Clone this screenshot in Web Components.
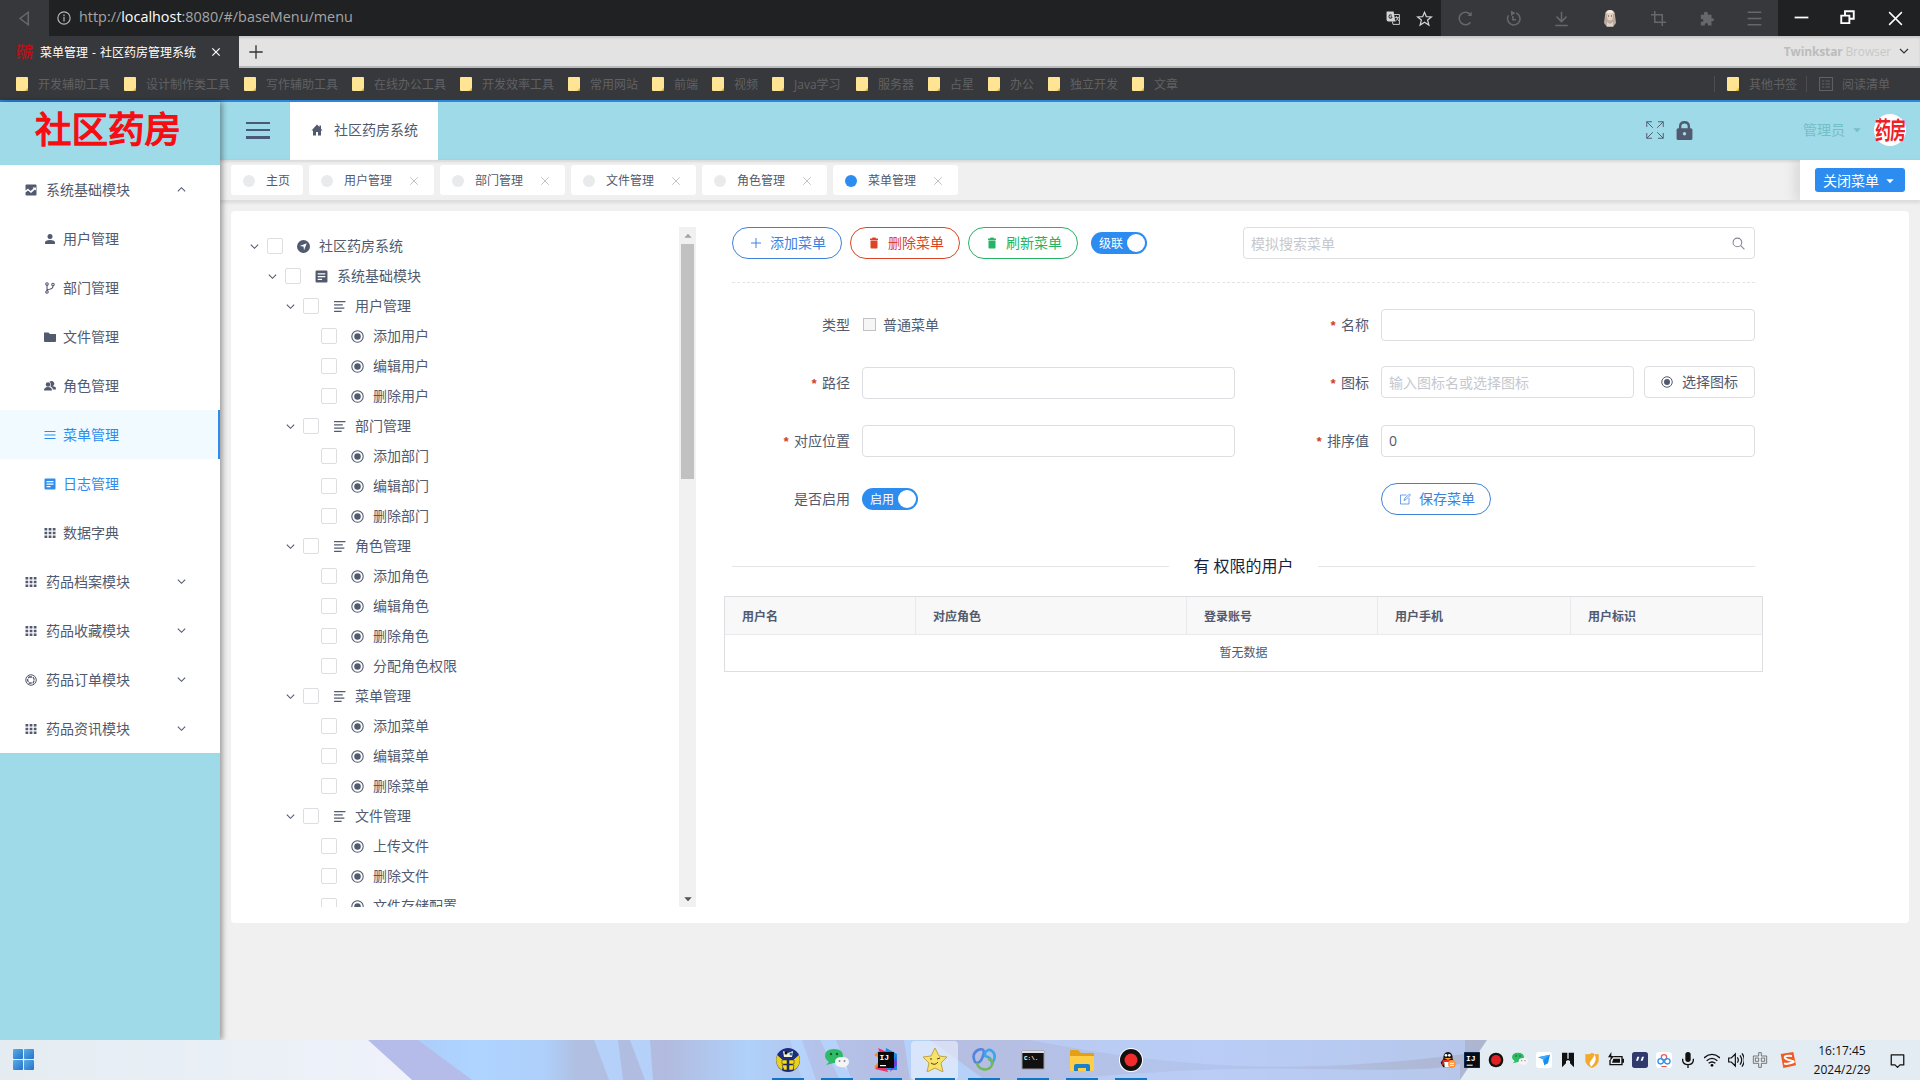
<!DOCTYPE html>
<html lang="zh-CN">
<head>
<meta charset="UTF-8">
<title>菜单管理 - 社区药房管理系统</title>
<style>
  html, body {
    margin: 0;
    height: 100%;
  }

  body {
    width: 1920px;
    height: 1080px;
    display: flex;
    flex-direction: column;
    overflow: hidden;
    background: #f0f0f0;
    color: #515a6e;
    font: 14px/20px "Open Sans", "Noto Sans CJK SC", sans-serif;
  }

  .app {
    flex: 1;
    min-height: 0;
    display: flex;
  }

  .main {
    flex: 1;
    min-width: 0;
    display: flex;
    flex-direction: column;
  }

  .card {
    box-sizing: border-box;
    width: 1678px;
    height: 712px;
    margin: 11px 0 0 11px;
    padding: 16px 0 0 16px;
    display: flex;
    background: #fff;
    border-radius: 4px;
  }
</style>
</head>
<body>
<browser-chrome></browser-chrome>
<div class="app">
  <side-menu></side-menu>
  <div class="main">
    <app-header></app-header>
    <tab-strip></tab-strip>
    <div class="card">
      <menu-tree></menu-tree>
      <menu-editor></menu-editor>
    </div>
  </div>
</div>
<task-bar></task-bar>

<script>
// 24x24 icon bodies, drawn in currentColor
const ICONS = {
  down: '<path d="M4 8l8 8 8-8" fill="none" stroke="currentColor" stroke-width="2.4"/>',
  up: '<path d="M4 16l8-8 8 8" fill="none" stroke="currentColor" stroke-width="2.4"/>',
  close: '<path d="M3 3l18 18M21 3L3 21" fill="none" stroke="currentColor" stroke-width="2"/>',
  cross: '<path d="M1 1l22 22M23 1L1 23" fill="none" stroke="currentColor" stroke-width="3.6"/>',
  caret: '<path d="M1 7h22L12 19z"/>',
  plus: '<path d="M12 2v20M2 12h20" fill="none" stroke="currentColor" stroke-width="2"/>',
  home: '<path d="M12 1L1 13h3v10h6v-7h4v7h6V13h3l-3-3.500V3h-3v3z"/>',
  trend: '<path fill-rule="evenodd" d="M3 1h18q2 0 2 2v18q0 2-2 2H3q-2 0-2-2V3q0-2 2-2zM1 13l5-4 5 5 6-5-2-2h7v6l-2-2-8 7-6-5-5 4z"/>',
  user: '<circle cx="12" cy="7" r="5"/><path d="M2 22v-3q0-5 10-5t10 5v3z"/>',
  branch: '<g fill="none" stroke="currentColor" stroke-width="2.200"><circle cx="6" cy="4" r="2.500"/><circle cx="6" cy="20" r="2.500"/><circle cx="18" cy="5" r="2.500"/><path d="M6 6v12M18 8q0 5-5 6t-7 3"/></g>',
  folder: '<path d="M0 3h9l3 3h12v3H0zM0 9h24v11q0 2-2 2H2q-2 0-2-2z"/>',
  users: '<circle cx="8" cy="9" r="4.500"/><path d="M0 21q0-7 8-7t8 7zM11 3q7-3 9 2t-3 7l6 2q1 2 1 5h-6q-1-5-5-6 2-6-2-10z"/>',
  menu: '<path d="M1 5h22M1 12h22M1 19h22" fill="none" stroke="currentColor" stroke-width="2.200"/>',
  paper: '<path fill-rule="evenodd" d="M3 1h18q2 0 2 2v18q0 2-2 2H3q-2 0-2-2V3q0-2 2-2zM5 6v2.500h14V6zM5 11v2.500h14V11zM5 16v2.500h8V16z"/>',
  grid: '<path d="M1 2h5.500v5H1zM9.300 2h5.500v5H9.300zM17.500 2H23v5h-5.500zM1 9.500h5.500v5H1zM9.300 9.500h5.500v5H9.300zM17.500 9.500H23v5h-5.500zM1 17h5.500v5H1zM9.300 17h5.500v5H9.300zM17.500 17H23v5h-5.500z"/>',
  aperture: '<g fill="none" stroke="currentColor" stroke-width="2"><circle cx="12" cy="12" r="10.500"/><path d="M8 6h8l3 6-3 6H8l-3-6z" stroke-width="2.600" stroke-dasharray="6 2"/></g>',
  nav: '<path fill-rule="evenodd" d="M12 0a12 12 0 100 24 12 12 0 000-24zM18 6l-5 13-1-7-7-1z"/>',
  text: '<path d="M2 3h21M2 9h16M2 15h19M2 21h14" fill="none" stroke="currentColor" stroke-width="2"/>',
  radio: '<circle cx="12" cy="12" r="10.500" fill="none" stroke="currentColor" stroke-width="2"/><circle cx="12" cy="12" r="6"/>',
  trash: '<path d="M9 1h6l1 2h4v3H4V3h4zM5 7h14v14q0 2-2 2H7q-2 0-2-2z"/>',
  search: '<g fill="none" stroke="currentColor" stroke-width="2"><circle cx="10" cy="10" r="8"/><path d="M16 16l7 7"/></g>',
  edit: '<g fill="none" stroke="currentColor" stroke-width="1.500"><path d="M15 4H3v18h17V10"/><path d="M10 15l2-5L21 2l2 2-9 9z"/></g>',
  expand: '<path d="M1 8V1h7M1 1l8 8M16 1h7v7M23 1l-8 8M1 16v7h7M1 23l8-8M23 16v7h-7M23 23l-8-8" fill="none" stroke="currentColor" stroke-width="1.300"/>',
  lock: '<path fill-rule="evenodd" d="M5 9V7q0-7 7-7t7 7v2h1q2 0 2 2v11q0 2-2 2H4q-2 0-2-2V11q0-2 2-2zM8 9h8V7q0-4-4-4T8 7zM12 14a2.200 2.200 0 100 4.400 2.200 2.200 0 000-4.400z"/>',
  back: '<path d="M18 2v20L5 12z" fill="none" stroke="currentColor" stroke-width="2.500"/>',
  info: '<circle cx="12" cy="12" r="10.500" fill="none" stroke="currentColor" stroke-width="2"/><path d="M11 10h2v8h-2zM11 6h2v2.500h-2z"/>',
  translate: '<path d="M1 1h12l3 17H4q-3 0-3-3z"/><path d="M14 6h9v17H12l-1-5" fill="none" stroke="currentColor" stroke-width="1.600"/><path d="M15 11h7M18 9v2q3 5 4 6M21 11q-1 4-5 6" fill="none" stroke="currentColor" stroke-width="1.500"/><path d="M10 7q-5-2-5 2.500T10 12v-2H8" fill="none" stroke="#202123" stroke-width="1.600"/>',
  star: '<path d="M12 2l3 7 8 .500-6 5 2 8-7-4.500-7 4.500 2-8-6-5L9 9z" fill="none" stroke="currentColor" stroke-width="2"/>',
  reload: '<path d="M20 18a10 10 0 110-12" fill="none" stroke="currentColor" stroke-width="2.400"/><path d="M22 1v7h-7z"/>',
  history: '<path d="M16 3a10 10 0 11-12 4M11 8v6h5" fill="none" stroke="currentColor" stroke-width="2.400"/><path d="M8-1v9l7-5z"/>',
  download: '<path d="M12 1v16M4 9l8 8 8-8M2 23h20" fill="none" stroke="currentColor" stroke-width="2.400"/>',
  crop: '<path d="M6 0v18h18M0 6h18v18" fill="none" stroke="currentColor" stroke-width="2.400"/>',
  puzzle: '<path d="M3 6h5q-1-5 3-5t3 5h6v6q4-1 4 2t-4 2v7h-6q1-4-2-4t-3 4H3v-6q4 1 4-2t-4-2z"/>',
  lines: '<path d="M1 2h22M1 12h22M1 22h22" fill="none" stroke="currentColor" stroke-width="2.400"/>',
  min: '<path d="M1 12h22" stroke="currentColor" stroke-width="2.800"/>',
  restore: '<path d="M8 8V2h14v12h-6M2 9h13v12H2z" fill="none" stroke="currentColor" stroke-width="3"/>',
  list: '<path d="M1 1h22v22H1zM5 7h4M11 7h8M5 12h4M11 12h8M5 17h4M11 17h8" fill="none" stroke="currentColor" stroke-width="1.800"/>',
  bell: '<path d="M2 3h20v16h-6l-4 4-4-4H2z" fill="none" stroke="currentColor" stroke-width="2" stroke-linejoin="round"/>'
};

class UiIcon extends HTMLElement {
  connectedCallback() {
    const size = this.getAttribute('size') || 12;
    const root = this.attachShadow({ mode: 'open' });
    root.innerHTML = `
      <style>
        :host { display: inline-flex; flex: none; width: ${size}px; height: ${size}px; }
        svg { width: 100%; height: 100%; fill: currentColor; overflow: visible; }
      </style>
      <svg viewBox="0 0 24 24">${ICONS[this.getAttribute('name')]}</svg>
    `;
  }
}
customElements.define('ui-icon', UiIcon);

class BrowserChrome extends HTMLElement {
  connectedCallback() {
    const marks = ['开发辅助工具', '设计制作类工具', '写作辅助工具', '在线办公工具', '开发效率工具', '常用网站',
      '前端', '视频', 'Java学习', '服务器', '占星', '办公', '独立开发', '文章'];
    const tools = ['reload', 'history', 'download', 'face', 'crop', 'puzzle', 'lines'];
    const mark = m => `<span class="mark"><i></i><span style="width:${m === 'Java学习' ? 48 : m.length * 12}px">${m}</span></span>`;
    this.attachShadow({ mode: 'open' }).innerHTML = `
      <style>
        :host { display: block; flex: none; height: 102px; font-size: 12px; color: #606164; }
        .row { display: flex; align-items: center; box-sizing: border-box; }
        .top { height: 36px; background: #202123; }
        .back { width: 49px; height: 36px; background: #37383b; display: flex; align-items: center; justify-content: center; color: #66676a; }
        .info { margin-left: 8px; color: #b8b8b9; }
        .url { flex: 1; margin-left: 8px; padding-bottom: 2px; font-size: 14.4px; color: #a4a5a6; white-space: nowrap; }
        .url b { font-weight: 400; color: #fff; }
        .page { display: flex; gap: 17px; margin-right: 9px; color: #d4d4d4; }
        .tools { width: 337px; height: 36px; background: #37383b; color: #66676a; display: flex; align-items: center; justify-content: space-around; }
        .tools > * { flex: none; }
        .win { width: 142px; display: flex; justify-content: space-around; color: #fff; }
        .tabs { height: 32px; background: #e3e3e3; border-bottom: 2px solid #b9babc; box-shadow: inset 0 2px 2px #c8c8c8; }
        .tab { width: 239px; height: 32px; align-self: flex-start; background: #37383b; color: #fff; display: flex; align-items: center; box-sizing: border-box; padding-left: 16px; }
        .fav { width: 16px; font: bold 9px/16px "Noto Sans CJK SC", sans-serif; transform: scaleY(1.6); color: #c20d19; letter-spacing: -1px; white-space: nowrap; }
        .tab .name { margin: 1px 15px 0 8px; width: 157px; word-spacing: 1px; white-space: nowrap; }
        .add { flex: 1; padding: 1px 0 0 9px; color: #333; display: flex; }
        .brand { color: #c8c8c8; margin: 2px 7px 0 0; letter-spacing: -.15px; }
        .brand b { color: #bcbcbc; }
        .marks { height: 32px; background: #37383b; padding-left: 16px; }
        .list { flex: 1; display: flex; gap: 14px; }
        .mark { display: flex; gap: 10px; align-items: center; white-space: nowrap; }
        .mark > span { padding-top: 2px; }
        .mark i { width: 12px; height: 14px; background: linear-gradient(315deg, #e9bd38 0 14%, #ffe493 15%); border-radius: 1px; }
        .sep { width: 1px; height: 16px; background: #4c4d50; }
        .line { height: 2px; background: #2d86dc; }
      </style>
      <div class="row top">
        <div class="back"><ui-icon name="back" size="15"></ui-icon></div>
        <ui-icon class="info" name="info" size="14"></ui-icon>
        <div class="url">http://<b>localhost</b>:8080/#/baseMenu/menu</div>
        <div class="page"><ui-icon name="translate" size="14"></ui-icon><ui-icon name="star" size="15"></ui-icon></div>
        <div class="tools">${tools.map(t => t === 'face'
          ? '<svg width="16" height="18" viewBox="0 0 16 18"><path d="M3 6q0-5 5-5t5 5l1 8-3 4H5l-3-4z" fill="#b8aca0"/><ellipse cx="8" cy="7.500" rx="3" ry="4" fill="#ead0bd"/><path d="M4 5q1-4 4-4t4 4q-4-2-8 0z" fill="#f0ebe4"/><path d="M6 7h1M9 7h1" stroke="#4b3030"/><path d="M5 13l3 2 3-2v4H5z" fill="#ddd3ca"/></svg>'
          : `<ui-icon name="${t}" size="15"></ui-icon>`).join('')}</div>
        <div class="win"><ui-icon name="min" size="15"></ui-icon><ui-icon name="restore" size="15"></ui-icon><ui-icon name="close" size="17"></ui-icon></div>
      </div>
      <div class="row tabs">
        <div class="tab"><span class="fav">药房</span><span class="name">菜单管理 - 社区药房管理系统</span><ui-icon name="cross" size="8"></ui-icon></div>
        <div class="add"><ui-icon name="plus" size="16"></ui-icon></div>
        <span class="brand"><b>Twinkstar</b> Browser</span>
        <ui-icon name="down" size="12" style="color:#333;margin-right:10px"></ui-icon>
      </div>
      <div class="row marks">
        <div class="list">${marks.map(mark).join('')}</div>
        <span class="sep" style="margin-right:12px"></span>${mark('其他书签')}
        <span class="sep" style="margin:0 12px 0 9px"></span>
        <ui-icon name="list" size="14"></ui-icon><span style="margin:2px 30px 0 9px">阅读清单</span>
      </div>
      <div class="line"></div>
    `;
  }
}
customElements.define('browser-chrome', BrowserChrome);

class SideMenu extends HTMLElement {
  connectedCallback() {
    const items = [
      ['trend', '系统基础模块', 'up'],
      ['user', '用户管理'],
      ['branch', '部门管理'],
      ['folder', '文件管理'],
      ['users', '角色管理'],
      ['menu', '菜单管理', '', 'on'],
      ['paper', '日志管理', '', 'hover'],
      ['grid', '数据字典'],
      ['grid', '药品档案模块', 'down'],
      ['grid', '药品收藏模块', 'down'],
      ['aperture', '药品订单模块', 'down'],
      ['grid', '药品资讯模块', 'down']
    ];
    this.attachShadow({ mode: 'open' }).innerHTML = `
      <style>
        :host { display: block; flex: none; width: 220px; background: #9edae7; box-shadow: 2px 0 6px rgba(0, 0, 0, .4); z-index: 2; }
        .logo { height: 63px; box-sizing: border-box; padding-left: 35px; font-size: 36.5px; line-height: 55px; color: #f60d12; -webkit-text-stroke: 1.4px #f60d12; white-space: nowrap; }
        .menu { background: #fff; }
        .item { height: 49px; box-sizing: border-box; display: flex; align-items: center; gap: 9px; padding: 0 33px 0 25px; }
        .item.sub { padding-left: 44px; gap: 7px; }
        .item span { flex: 1; }
        .on, .hover { color: #2d8cf0; }
        .on { background: #f0faff; border-right: 2px solid #2d8cf0; }
      </style>
      <div class="logo">社区药房</div>
      <div class="menu">
        ${items.map(([icon, name, arrow, state]) => `
          <div class="item ${arrow ? '' : 'sub'} ${state || ''}">
            <ui-icon name="${icon}" size="12"></ui-icon><span>${name}</span>
            ${arrow ? `<ui-icon name="${arrow}" size="11"></ui-icon>` : ''}
          </div>`).join('')}
      </div>
    `;
  }
}
customElements.define('side-menu', SideMenu);

class AppHeader extends HTMLElement {
  connectedCallback() {
    this.attachShadow({ mode: 'open' }).innerHTML = `
      <style>
        :host { display: flex; flex: none; align-items: center; height: 58px; background: #9edae7; }
        .burger { width: 24px; height: 17px; margin: 0 20px 2px 26px; display: flex; flex-direction: column; justify-content: space-between; }
        .burger i { height: 2.5px; background: #495a78; }
        .sys { width: 148px; height: 58px; box-sizing: border-box; padding: 0 0 2px 21px; display: flex; align-items: center; gap: 11px; background: #fff; }
        .tools { margin-left: auto; padding-bottom: 2px; display: flex; align-items: center; }
        .user { margin: 0 8px 0 109px; color: #74bfc5; }
        .avatar { width: 32px; height: 32px; margin: 0 14px 0 13px; border-radius: 50%; background: #fff; color: #ee2027; text-align: center; }
        .avatar span { display: block; font-size: 16px; font-weight: 700; line-height: 32px; letter-spacing: -1px; transform: scaleY(1.5); white-space: nowrap; }
      </style>
      <div class="burger"><i></i><i></i><i></i></div>
      <div class="sys"><ui-icon name="home" size="12"></ui-icon>社区药房系统</div>
      <div class="tools">
        <ui-icon name="expand" size="18"></ui-icon>
        <ui-icon name="lock" size="19" style="margin-left:11px"></ui-icon>
        <span class="user">管理员</span>
        <ui-icon name="caret" size="8" style="color:#74bfc5"></ui-icon>
        <div class="avatar"><span>药房</span></div>
      </div>
    `;
  }
}
customElements.define('app-header', AppHeader);

class TabStrip extends HTMLElement {
  connectedCallback() {
    const tabs = ['主页', '用户管理', '部门管理', '文件管理', '角色管理', '菜单管理'];
    this.attachShadow({ mode: 'open' }).innerHTML = `
      <style>
        :host { display: flex; flex: none; align-items: center; gap: 6px; height: 40px; padding-left: 11px; background: #f0f0f0; font-size: 12px; box-shadow: 0 2px 3px 1px rgba(100, 100, 100, .14), inset 0 3px 2px -1px rgba(100, 100, 100, .15); }
        .tab { width: 125px; height: 30px; box-sizing: border-box; padding: 1px 15px 0 12px; display: flex; align-items: center; background: #fff; border-radius: 3px; }
        .tab.first { width: 72px; padding-right: 0; }
        .tab i { width: 12px; height: 12px; margin-right: 11px; border-radius: 50%; background: #e8eaec; }
        .tab.on i { background: #2d8cf0; }
        .tab ui-icon { margin-left: auto; color: #b5b8be; }
        .end { align-self: stretch; width: 120px; margin-left: auto; display: flex; align-items: center; justify-content: center; background: #fff; box-shadow: -3px 0 12px 2px rgba(0, 0, 0, .1); clip-path: inset(0 0 0 -18px); }
        .btn { width: 90px; height: 24px; box-sizing: border-box; padding: 1px 0 0 8px; display: flex; align-items: center; gap: 7px; border-radius: 3px; background: #2d8cf0; color: #fff; font-size: 14px; }
      </style>
      ${tabs.map((t, i) => `<div class="tab ${i ? '' : 'first'} ${i === 5 ? 'on' : ''}"><i></i>${t}${i ? '<ui-icon name="close" size="10"></ui-icon>' : ''}</div>`).join('')}
      <div class="end"><span class="btn">关闭菜单<ui-icon name="caret" size="8"></ui-icon></span></div>
    `;
  }
}
customElements.define('tab-strip', TabStrip);

class MenuTree extends HTMLElement {
  connectedCallback() {
    const rows = [[0, '社区药房系统'], [1, '系统基础模块']];
    const groups = {
      '用户管理': ['添加用户', '编辑用户', '删除用户'],
      '部门管理': ['添加部门', '编辑部门', '删除部门'],
      '角色管理': ['添加角色', '编辑角色', '删除角色', '分配角色权限'],
      '菜单管理': ['添加菜单', '编辑菜单', '删除菜单'],
      '文件管理': ['上传文件', '删除文件', '文件存储配置']
    };
    Object.entries(groups).forEach(([name, children]) => {
      rows.push([2, name]);
      children.forEach(child => rows.push([3, child]));
    });
    const icons = ['nav', 'paper', 'text', 'radio'];
    this.attachShadow({ mode: 'open' }).innerHTML = `
      <style>
        :host { display: flex; flex: none; width: 449px; height: 680px; }
        .rows { flex: 1; overflow: hidden; padding-top: 4px; }
        .row { height: 30px; display: flex; align-items: center; }
        .arrow { width: 14px; display: flex; justify-content: center; }
        .box { width: 14px; height: 14px; border: 1px solid #dcdee2; border-radius: 2px; margin: 0 14px 0 6px; }
        .row ui-icon + span { margin-left: 9px; }
        .bar { width: 17px; background: #f1f1f1; display: flex; flex-direction: column; align-items: center; color: #a3a3a3; }
        .bar ui-icon { margin: 5px 0 4px; }
        .thumb { width: 13px; height: 235px; background: #c1c1c1; margin-bottom: auto; }
      </style>
      <div class="rows">
        ${rows.map(([level, name]) => `
          <div class="row" style="padding-left:${level * 18}px">
            <span class="arrow">${level < 3 ? '<ui-icon name="down" size="11"></ui-icon>' : ''}</span>
            <span class="box"></span>
            <ui-icon name="${icons[level]}" size="13"></ui-icon><span>${name}</span>
          </div>`).join('')}
      </div>
      <div class="bar">
        <ui-icon name="caret" size="8" style="transform:rotate(180deg)"></ui-icon>
        <div class="thumb"></div>
        <ui-icon name="caret" size="8" style="color:#505050"></ui-icon>
      </div>
    `;
  }
}
customElements.define('menu-tree', MenuTree);

class UiButton extends HTMLElement {
  connectedCallback() {
    this.attachShadow({ mode: 'open' }).innerHTML = `
      <style>
        :host { display: inline-flex; flex: none; align-items: center; gap: 8px; box-sizing: border-box; width: 110px; height: 32px; padding-left: 17px; border: 1px solid currentColor; border-radius: 16px; white-space: nowrap; }
        :host([plain]) { border-color: #dcdee2; border-radius: 4px; width: 111px; padding-left: 16px; gap: 9px; }
      </style>
      <ui-icon name="${this.getAttribute('icon')}" size="12"></ui-icon><slot></slot>
    `;
  }
}
customElements.define('ui-button', UiButton);

class UiSwitch extends HTMLElement {
  connectedCallback() {
    this.attachShadow({ mode: 'open' }).innerHTML = `
      <style>
        :host { display: inline-flex; align-items: center; justify-content: space-between; box-sizing: border-box; width: 56px; height: 22px; padding: 1px 2px 0 8px; border-radius: 11px; background: #2d8cf0; color: #fff; font-size: 12px; }
        i { width: 18px; height: 18px; margin-bottom: 1px; border-radius: 50%; background: #fff; }
      </style>
      <slot></slot><i></i>
    `;
  }
}
customElements.define('ui-switch', UiSwitch);

class UiInput extends HTMLElement {
  connectedCallback() {
    this.attachShadow({ mode: 'open' }).innerHTML = `
      <style>
        :host { display: flex; flex: 1; align-items: center; justify-content: space-between; box-sizing: border-box; height: 32px; padding: 0 9px 0 7px; border: 1px solid #dcdee2; border-radius: 4px; background: #fff; }
        :host([hint]) { color: #c5c8ce; padding-top: 1px; }
      </style>
      <slot></slot>
    `;
  }
}
customElements.define('ui-input', UiInput);

class FormItem extends HTMLElement {
  connectedCallback() {
    this.attachShadow({ mode: 'open' }).innerHTML = `
      <style>
        :host { display: flex; align-items: center; height: 32px; }
        label { width: 118px; margin-right: 12px; text-align: right; flex: none; }
        :host([required]) label::before { content: "*"; margin-right: 4px; color: #d2401c; font: bold 13px/1 "Liberation Mono", monospace; }
      </style>
      <label>${this.getAttribute('label') || ''}</label><slot></slot>
    `;
  }
}
customElements.define('form-item', FormItem);

class UserTable extends HTMLElement {
  connectedCallback() {
    const cols = ['用户名', '对应角色', '登录账号', '用户手机', '用户标识'];
    this.attachShadow({ mode: 'open' }).innerHTML = `
      <style>
        :host { display: block; box-sizing: border-box; height: 76px; border: 1px solid #dcdee2; font-size: 12px; }
        .head { display: grid; grid-template-columns: 191px 271px 191px 193px 1fr; height: 37px; background: #f8f8f9; border-bottom: 1px solid #e8eaec; font-weight: 700; line-height: 40px; }
        .head span { height: 37px; padding-left: 17px; border-right: 1px solid #e8eaec; }
        .head span:last-child { border: 0; }
        .none { text-align: center; line-height: 36px; }
      </style>
      <div class="head">${cols.map(c => `<span>${c}</span>`).join('')}</div>
      <div class="none">暂无数据</div>
    `;
  }
}
customElements.define('user-table', UserTable);

class MenuEditor extends HTMLElement {
  connectedCallback() {
    this.attachShadow({ mode: 'open' }).innerHTML = `
      <style>
        :host { display: block; flex: none; width: 1023px; margin-left: 36px; }
        .bar { display: flex; align-items: center; gap: 8px; }
        .bar ui-switch { margin: 0 88px 0 5px; }
        .rule { margin: 23px 0 26px; height: 1px; background: repeating-linear-gradient(90deg, #e2e4e8 0 3px, transparent 3px 5px); }
        .form { display: grid; grid-template-columns: 503px 504px; gap: 26px 16px; }
        .check { width: 11px; height: 11px; border: 1px solid #bfc2c7; background: #f6f6f6; margin: 0 7px 2px 1px; }
        .type { padding-bottom: 1px; }
        .title { display: flex; align-items: center; gap: 24px; height: 24px; margin: 39px 0 18px; font-size: 16px; color: #17233d; white-space: nowrap; }
        .title::before, .title::after { content: ""; flex: 1; height: 1px; background: #e3e5e8; }
        user-table { margin: 0 -8px; }
      </style>
      <div class="bar">
        <ui-button icon="plus" style="color:#3e82dc">添加菜单</ui-button>
        <ui-button icon="trash" style="color:#db4424">删除菜单</ui-button>
        <ui-button icon="trash" style="color:#25b365">刷新菜单</ui-button>
        <ui-switch>级联</ui-switch>
        <ui-input hint>模拟搜索菜单<ui-icon name="search" size="13" style="color:#808695"></ui-icon></ui-input>
      </div>
      <div class="rule"></div>
      <div class="form">
        <form-item label="类型"><i class="check"></i><span class="type">普通菜单</span></form-item>
        <form-item label="名称" required><ui-input></ui-input></form-item>
        <form-item label="路径" required><ui-input></ui-input></form-item>
        <form-item label="图标" required>
          <ui-input hint style="margin:-2px 10px 0 0">输入图标名或选择图标</ui-input>
          <ui-button icon="radio" plain style="margin-top:-2px">选择图标</ui-button>
        </form-item>
        <form-item label="对应位置" required><ui-input></ui-input></form-item>
        <form-item label="排序值" required><ui-input>0</ui-input></form-item>
        <form-item label="是否启用"><ui-switch>启用</ui-switch></form-item>
        <form-item><ui-button icon="edit" style="color:#3e82dc">保存菜单</ui-button></form-item>
      </div>
      <div class="title">有 权限的用户</div>
      <user-table></user-table>
    `;
  }
}
customElements.define('menu-editor', MenuEditor);

// Taskbar art, each on a 24x24 canvas
const WECHAT = '<path d="M1 17l3-3Q0 11 0 8q0-7 9-7t9 7q0 6-9 7z" fill="#2dbb66"/><circle cx="6" cy="6" r="1.200" fill="#175a32"/><circle cx="12" cy="6" r="1.200" fill="#175a32"/><path d="M22 22l-2-3q-10 1-10-5 0-5 7-5t7 5q0 3-3 4z" fill="#f5f5f5"/><circle cx="14.500" cy="13" r="1" fill="#888"/><circle cx="19.500" cy="13" r="1" fill="#888"/>';
const RECORD = '<circle cx="12" cy="12" r="12" fill="#fff"/><circle cx="12" cy="12" r="11" fill="#111"/><circle cx="12" cy="12" r="6.500" fill="#f22b2b"/>';
const APPS = [
  '<circle cx="12" cy="12" r="12" fill="#1c2d80"/><path d="M1 7q-3 10 5 15l2-9zM23 7q3 10-5 15l-2-9z" fill="#e7d01e"/><path d="M7 3l5 2 5-2-1 6H8z" fill="#f5f2dc"/><circle cx="10" cy="5" r="1.500" fill="#111"/><circle cx="15" cy="6" r="1.500" fill="#1c7890"/><path d="M6 12h5v4H6zM13 12h5v4h-5zM6 17h5v5H8zM13 17h5l-1 5h-4z" fill="#f5dc20" stroke="#222" stroke-width=".500"/>',
  WECHAT,
  '<path d="M0 7l6-5 3 10zM0 19l9-10 3 14z" fill="#f68c1f"/><path d="M4 0l9 4-4 8z" fill="#f0286c"/><path d="M12 0l11 6v16H9z" fill="#148ce8"/><path d="M1 21l8-9 5 12z" fill="#ec3466"/><path d="M16 24l7-7-1-9z" fill="#743bd0"/><path d="M4 4h16v16H4z" fill="#090909"/><text x="5.500" y="12" font-size="8" font-weight="700" fill="#fff" font-family="Liberation Mono">IJ</text><path d="M6 17h6v1.200H6z" fill="#fff"/>',
  '<path d="M12 0l4 8 8 1-6 6 2 9-8-4-8 4 2-9-6-6 8-1z" fill="#f8e369" stroke="#c1a247" stroke-linejoin="round"/><path d="M8 10v2M14 11l3-1M8 15q4 3 7-1" fill="none" stroke="#483a20"/>',
  '<g fill="none" stroke-width="2.600"><path d="M3 14Q-1 6 6 2q8-3 5 6t-8 6z" stroke="#5584dd"/><path d="M13 5q3-5 7-2t2 9l-2 3q-1-6-7-7z" stroke="#3ba5ed"/><path d="M5 15a8 8 0 0015 2q2-5-4-6" stroke="#70b957"/></g>',
  '<path d="M1 3h22v18H1z" fill="#111" stroke="#999"/><path d="M1 3h22v2H1z" fill="#ddd"/><text x="3" y="12" font-size="6" font-weight="700" fill="#fff" font-family="Liberation Mono">C:\\.</text>',
  '<path d="M0 3q0-1 1-1h7l3 3h12q1 0 1 1v16H0z" fill="#e3a017"/><path d="M0 8h24v14q0 1-1 1H1q-1 0-1-1z" fill="#ffce48"/><path d="M4 23v-5q0-2 2-2h12q2 0 2 2v5h-4v-3H8v3z" fill="#1980cd"/>',
  RECORD
];
const TRAY = [
  '<path d="M5 10q0-10 7-10t7 10l3 8-5 5H5l-4-7z" fill="#161616"/><path d="M6 12q6 3 12 0l-2 11H7z" fill="#fff"/><circle cx="9" cy="5" r="2" fill="#fff"/><circle cx="14" cy="5" r="2" fill="#fff"/><path d="M6 9h12l-6 3z" fill="#f69f20"/><path d="M4 12h14v3H6v4H3z" fill="#e9282b"/><circle cx="18" cy="18" r="6" fill="#ff963c"/><path d="M15 17h6M15 20h6" stroke="#fff" stroke-width="1.500"/>',
  '<path d="M0 0h24v24H0z" fill="#080b12" stroke="#1767c0"/><text x="3" y="13" font-size="12" font-weight="700" fill="#fff" font-family="Liberation Mono">IJ</text><path d="M4 19h9v1.600H4z" fill="#fff"/>',
  '<circle cx="12" cy="12" r="11" fill="#111"/><circle cx="12" cy="12" r="7.500" fill="#df1f24"/>',
  WECHAT,
  '<rect width="24" height="24" rx="4" fill="#fff"/><path d="M3 8l18-4-3 13-6 3v-9z" fill="#148df4"/><path d="M3 8l18-4-8 6-2 8-1-7z" fill="#45a9f7"/>',
  '<path d="M3 1h8v9h2V1h8v22l-6-6v-4h-2v-1h-2v1H9v4l-6 6z" fill="#111"/>',
  '<path d="M2 3q6 1 10-2 4 3 10 2v11q-2 7-10 10-8-3-10-10z" fill="#f5a92b"/><path d="M11 22q-5-5 0-10t4-9q7 9-4 19z" fill="#fff"/>',
  '<g fill="none" stroke="#111" stroke-width="2"><path d="M8 7h13v12H3v-7M23 10v6"/></g><path d="M8 10h10v6H6zM5 0L0 8h4l-1 6 6-8H5z" fill="#111"/>',
  '<rect width="24" height="24" rx="4" fill="#303a6d"/><path d="M8 7h3l-2 6H6zM15 7h3l-2 6h-3z" fill="#fff"/>',
  '<rect width="24" height="24" rx="5" fill="#fff"/><g fill="none" stroke-width="2"><circle cx="12" cy="8" r="4" stroke="#eb5a5a"/><circle cx="7" cy="14" r="4" stroke="#2d93e9"/><circle cx="17" cy="14" r="4" stroke="#2d93e9"/></g><path d="M8 22h8" stroke="#d33" stroke-width="1.500"/>',
  '<rect x="8" y="0" width="8" height="15" rx="4" fill="#111"/><path d="M4 10v3q1 6 8 6t8-6v-3M12 19v5" fill="none" stroke="#111" stroke-width="2"/>',
  '<g fill="none" stroke="#111" stroke-width="2"><path d="M0 9q12-11 24 0M4 13q8-7 16 0M7 17q5-4 10 0"/></g><circle cx="12" cy="20" r="2"/>',
  '<g fill="none" stroke="#111" stroke-width="1.800"><path d="M1 9h4l6-6v18l-6-6H1zM14 8q3 4 0 8M18 5q5 7 0 14M21 2q7 10 0 20"/></g>',
  '<g fill="none" stroke="#666" stroke-width="1.300"><path d="M10 1h4v5h8v11h-8v6h-4v-6H2V6h8zM5 9h5v5H5zM14 9h5v5h-5z"/></g>',
  '<path d="M1 3l19-3 4 20-19 4z" fill="#f15a24"/><path d="M18 6q-11-1-11 2t10 5-8 5l-3-1" fill="none" stroke="#fff" stroke-width="3"/>'
];

class TaskBar extends HTMLElement {
  connectedCallback() {
    const art = (body, size) => `<svg width="${size}" height="${size}" viewBox="0 0 24 24">${body}</svg>`;
    this.attachShadow({ mode: 'open' }).innerHTML = `
      <style>
        :host { display: grid; grid-template-columns: 763px 392px 1fr; position: relative; z-index: 3; flex: none; height: 40px; color: #111; background: #bac9ec; }
        .wall { position: absolute; inset: 0; width: 1920px; height: 40px; z-index: -1; }
        .start { display: grid; grid-template-columns: 10px 10px; grid-template-rows: 10px 10px; gap: 1px; margin: 9px 0 0 13px; }
        .start i { background: linear-gradient(135deg, #59afe5, #2670cd); border-radius: 1px; }
        .apps { display: flex; }
        .app { width: 49px; display: flex; flex-direction: column; align-items: center; justify-content: space-between; }
        .app svg { margin-top: 8px; }
        .app::after { content: ""; width: 32px; height: 2px; background: #0f75c7; }
        .app.on { width: 47px; margin: 1px 1px 0; background: rgba(235, 240, 252, .65); border-radius: 4px; }
        .app.on svg { margin-top: 7px; }
        .app.on::after { width: 40px; }
        .tray { display: flex; align-items: center; justify-content: flex-end; }
        .icons { display: flex; gap: 8px; }
        .icons svg:last-child { margin-left: 4px; }
        time { width: 76px; margin-left: 8px; text-align: center; font-size: 12px; line-height: 19px; }
      </style>
      <svg class="wall" viewBox="0 0 1920 40" preserveAspectRatio="none">
        <defs>
          <linearGradient id="sky"><stop stop-color="#adc6f6"/><stop offset=".1" stop-color="#aed4ff"/><stop offset=".16" stop-color="#aed0fb"/><stop offset=".19" stop-color="#b0c0e2"/><stop offset=".27" stop-color="#b2bbdf"/><stop offset=".34" stop-color="#afd1fa"/><stop offset=".4" stop-color="#b4c2ea"/><stop offset=".5" stop-color="#b6bddf"/><stop offset=".75" stop-color="#b3c5ed"/><stop offset="1" stop-color="#adb4ce"/></linearGradient>
          <linearGradient id="pale"><stop stop-color="#e4ecf2"/><stop offset="1" stop-color="#eff2fa"/></linearGradient>
        </defs>
        <path d="M360 0h1140v40H360z" fill="url(#sky)"/>
        <path d="M368 0h50l54 40h-60z" fill="#b5bce9"/>
        <path d="M594 0h24l5 40h-14zM630 0h20l3 40h-8zM790 0h12l14 40h-14zM820 0h16l16 40h-12zM904 0h26l55 40h-75z" fill="#b7d6ff" opacity=".8"/>
        <path d="M1030 0q110 22 210 26t225-12V0zM1060 40q130-14 260-11t140-6v17z" fill="#bdd2fb" opacity=".6"/>
        <path d="M0 0h368l44 40H0z" fill="url(#pale)"/>
        <path d="M1487 0h433v40h-460z" fill="#e3ebf3"/>
      </svg>
      <div class="start"><i></i><i></i><i></i><i></i></div>
      <div class="apps">${APPS.map((a, i) => `<div class="app ${i === 3 ? 'on' : ''}">${art(a, 24)}</div>`).join('')}</div>
      <div class="tray">
        <div class="icons">${TRAY.map(t => art(t, 16)).join('')}</div>
        <time>16:17:45<br>2024/2/29</time>
        <ui-icon name="bell" size="15" style="margin:0 15px 0 10px"></ui-icon>
      </div>
    `;
  }
}
customElements.define('task-bar', TaskBar);
</script>
</body>
</html>
